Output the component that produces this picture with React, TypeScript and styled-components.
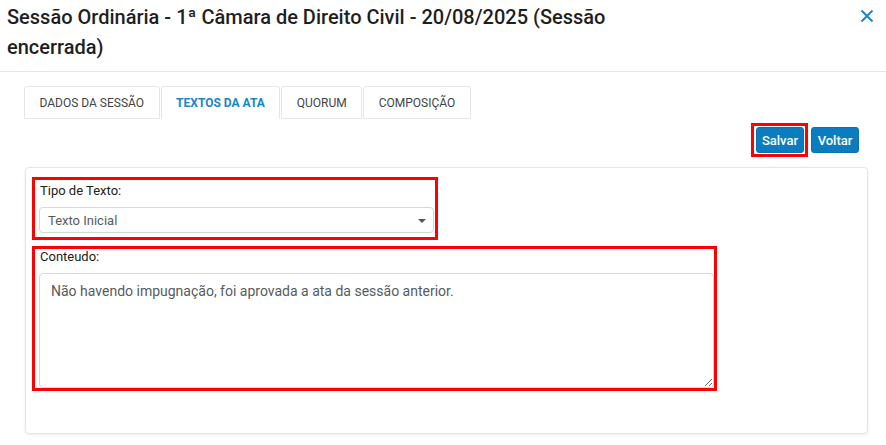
import React from "react";
import styled, { createGlobalStyle } from "styled-components";

const GlobalStyle = createGlobalStyle`
  body {
    margin: 0;
    background: #ffffff;
    font-family: Roboto, "Liberation Sans", Arial, sans-serif;
    color: #222;
  }
  * { box-sizing: border-box; }
`;

const Page = styled.div`
  width: 886px;
  height: 445px;
  background: #fff;
  overflow: hidden;
`;

const Header = styled.div`
  display: flex;
  justify-content: space-between;
  align-items: flex-start;
  padding: 2px 12px 9px 7px;
  border-bottom: 1px solid #e4e6e8;
`;

const Title = styled.h1`
  margin: 0;
  max-width: 680px;
  font-size: 20px;
  line-height: 30px;
  font-weight: 500;
  color: #1f1f1f;
`;

const CloseButton = styled.button`
  border: none;
  background: none;
  padding: 0;
  margin-top: 7px;
  color: #1b87c6;
  cursor: pointer;
  display: flex;
`;

const Content = styled.div`
  padding: 14px 18px 0 24px;
`;

const TabMenu = styled.div`
  display: flex;
  gap: 1px;
`;

const Tab = styled.button<{ $active?: boolean }>`
  height: 33px;
  padding: 0 14.5px;
  background: #fff;
  border: 1px solid #e3e6ea;
  border-bottom-color: ${(p) => (p.$active ? "transparent" : "#e3e6ea")};
  border-radius: 3px 3px 0 0;
  font-family: Roboto, "Liberation Sans", Arial, sans-serif;
  font-size: 12px;
  font-weight: ${(p) => (p.$active ? 700 : 400)};
  color: ${(p) => (p.$active ? "#1786c8" : "#444")};
  text-transform: uppercase;
  cursor: pointer;
`;

const Actions = styled.div`
  display: flex;
  justify-content: flex-end;
  align-items: center;
  gap: 3px;
  margin-top: 4px;
  padding-right: 9px;
`;

const Highlight = styled.div<{ $pad?: string }>`
  border: 3px solid #ff0000;
  padding: ${(p) => p.$pad || "0"};
`;

const Button = styled.button`
  height: 26px;
  width: 48px;
  padding: 0;
  background: #0b7dbf;
  border: 1px solid #0a72af;
  border-radius: 3px;
  color: #fff;
  font-family: Roboto, "Liberation Sans", Arial, sans-serif;
  font-size: 13px;
  font-weight: 500;
  cursor: pointer;
`;

const Panel = styled.div`
  margin: 10px 0 0 1px;
  height: 267px;
  border: 1px solid #e3e5e8;
  border-radius: 4px;
  box-shadow: 0 1px 3px rgba(0, 0, 0, 0.08);
  padding: 9px 0 0 6px;
  display: flex;
  flex-direction: column;
  gap: 6px;
`;

const FormGroup = styled.div<{ $width: number; $top: number; $bottom: number }>`
  width: ${(p) => p.$width}px;
  border: 3px solid #ff0000;
  padding: ${(p) => `${p.$top}px 0 ${p.$bottom}px 4px`};
`;

const Label = styled.label`
  display: block;
  font-size: 13px;
  line-height: 16px;
  color: #222;
  margin: 0 0 8px 1px;
`;

const Select = styled.div`
  position: relative;
  height: 26px;
  margin-right: 1px;
  border: 1px solid #d3d8dd;
  border-radius: 4px;
  padding-left: 8px;
  display: flex;
  align-items: center;
  font-size: 13px;
  color: #555b61;
`;

const Caret = styled.span`
  position: absolute;
  right: 7px;
  top: 11px;
  width: 0;
  height: 0;
  border-left: 4px solid transparent;
  border-right: 4px solid transparent;
  border-top: 4px solid #555;
`;

const TextArea = styled.textarea`
  display: block;
  width: 100%;
  height: 115px;
  margin: 0;
  border: 1px solid #d3d8dd;
  border-radius: 4px;
  padding: 8px 11px;
  font-family: Roboto, "Liberation Sans", Arial, sans-serif;
  font-size: 14px;
  line-height: 18px;
  color: #555b61;
  resize: vertical;
  outline: none;
`;

const tabs = ["Dados da Sessão", "Textos da Ata", "Quorum", "Composição"];

const App: React.FC = () => {
  return (
    <Page>
      <GlobalStyle />
      <Header>
        <Title>
          Sessão Ordinária - 1ª Câmara de Direito Civil - 20/08/2025 (Sessão
          encerrada)
        </Title>
        <CloseButton aria-label="Fechar">
          <svg width="14" height="14" viewBox="0 0 14 14">
            <path
              d="M1.5 1.5 L12.5 12.5 M12.5 1.5 L1.5 12.5"
              stroke="currentColor"
              strokeWidth="2"
              fill="none"
            />
          </svg>
        </CloseButton>
      </Header>

      <Content>
        <TabMenu>
          {tabs.map((t) => (
            <Tab key={t} $active={t === "Textos da Ata"}>
              {t}
            </Tab>
          ))}
        </TabMenu>

        <Actions>
          <Highlight $pad="1px 1px 1px 2px">
            <Button>Salvar</Button>
          </Highlight>
          <Button>Voltar</Button>
        </Actions>

        <Panel>
          <FormGroup $width={406} $top={3} $bottom={4}>
            <Label>Tipo de Texto:</Label>
            <Select>
              Texto Inicial
              <Caret />
            </Select>
          </FormGroup>

          <FormGroup $width={685} $top={0} $bottom={0}>
            <Label>Conteudo:</Label>
            <TextArea
              readOnly
              defaultValue="Não havendo impugnação, foi aprovada a ata da sessão anterior."
            />
          </FormGroup>
        </Panel>
      </Content>
    </Page>
  );
};

export default App;
